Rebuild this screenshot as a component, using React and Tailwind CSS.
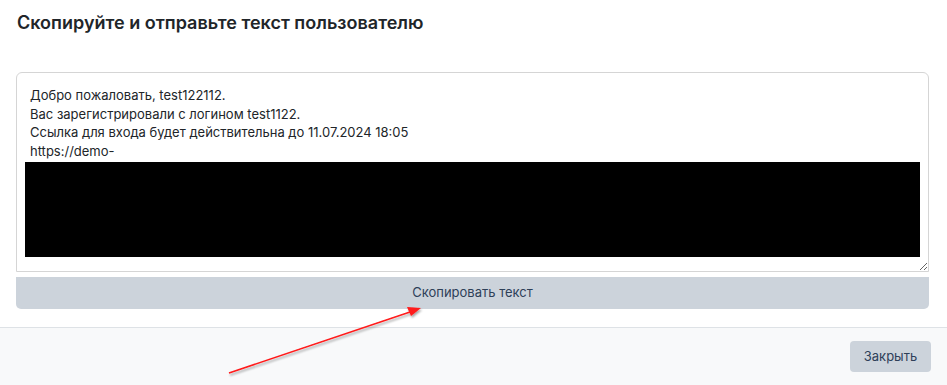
export default function App() {
  return (
    <div className="relative w-[947px] h-[385px] bg-white overflow-hidden" style={{ fontFamily: "Inter, 'Noto Sans', sans-serif" }}>
      <div className="px-[17px] pt-[12px] h-[60px]">
        <h1 className="text-[18px] leading-[22px] font-semibold text-[#212529]">Скопируйте и отправьте текст пользователю</h1>
      </div>
      <div className="pl-4 pr-[18px] pt-[12px] pb-[18px]">
        <div className="h-[200px] border border-[#d5d5d5] rounded-t-[6px] bg-white pl-[13px] pr-[8px] pt-[13px] text-[13px] leading-[18.5px] text-[#212529] resize-y overflow-auto">
          <div>Добро пожаловать, test122112.</div>
          <div>Вас зарегистрировали с логином test1122.</div>
          <div>Ссылка для входа будет действительна до 11.07.2024 18:05</div>
          <div>https://demo-</div>
          <div className="-ml-[5px] mt-[2px] h-[95px] bg-black"></div>
        </div>
        <button className="mt-[5px] w-full h-[32px] rounded-b-[5px] bg-[#ccd3db] text-[13px] text-[#2e4058]">Скопировать текст</button>
      </div>
      <div className="border-t border-[#dee2e6] bg-[#f8f9fa] h-[58px] flex justify-end items-start pt-[13px] pr-4">
        <button className="w-[81px] h-[31px] rounded-[4px] bg-[#ccd3db] text-[13px] text-[#2e4058]">Закрыть</button>
      </div>
      <svg className="absolute left-0 top-0 pointer-events-none" width="947" height="385">
        <defs>
          <filter id="sh" x="-10%" y="-10%" width="120%" height="120%">
            <feDropShadow dx="1" dy="2" stdDeviation="1" floodColor="#000" floodOpacity="0.35" />
          </filter>
        </defs>
        <g filter="url(#sh)">
          <line x1="229" y1="373" x2="410" y2="312" stroke="#ff1a1a" strokeWidth="1.6" />
          <polygon points="421,308 407,307 411,316" fill="#ff1a1a" />
        </g>
      </svg>
    </div>
  );
}
